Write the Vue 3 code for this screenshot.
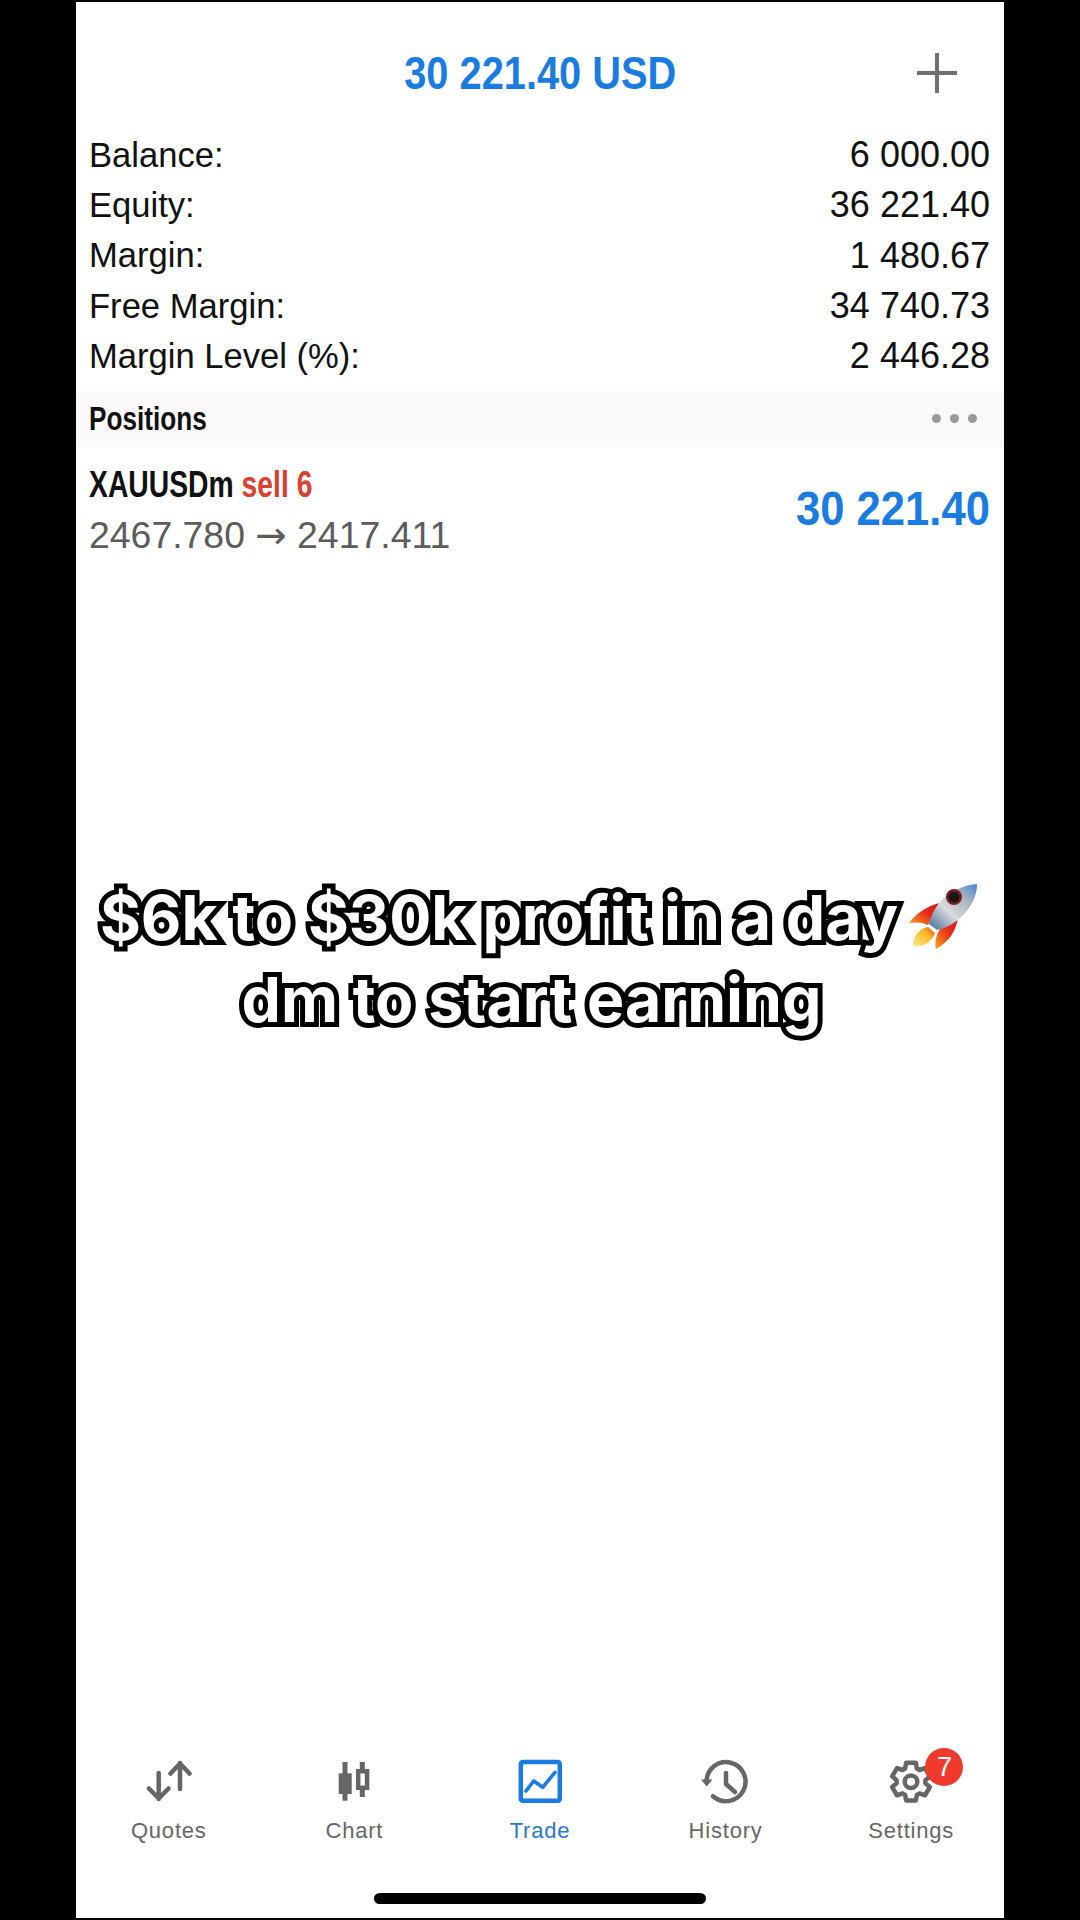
<template>
  <div class="screen">
    <div class="panel">
      <header class="top">
        <span class="top-title">30 221.40 USD</span>
        <svg class="plus" width="40" height="40" viewBox="0 0 40 40">
          <path d="M0 20H40M20 0V40" stroke="#707070" stroke-width="4" />
        </svg>
      </header>

      <div class="summary">
        <div v-for="row in summary" :key="row.label" class="summary-row">
          <span>{{ row.label }}</span>
          <span class="summary-value">{{ row.value }}</span>
        </div>
      </div>

      <div class="section">
        <span class="section-title">Positions</span>
        <span class="dots"><i></i><i></i><i></i></span>
      </div>

      <div class="position">
        <div class="position-left">
          <div class="position-name">XAUUSDm <span class="sell">sell 6</span></div>
          <div class="position-price">2467.780 <span class="arrow">→</span> 2417.411</div>
        </div>
        <div class="position-profit">30 221.40</div>
      </div>

      <nav class="tabs">
        <div v-for="tab in tabs" :key="tab.name" class="tab" :class="{ active: tab.name === 'Trade' }">
          <svg width="60" height="60" viewBox="0 0 60 60" fill="none" stroke="currentColor" stroke-width="4.5">
            <template v-if="tab.name === 'Quotes'">
              <path d="M19.7 21V47M10 36.5L19.7 46.5L29.5 36.5" stroke-linecap="round" stroke-linejoin="round" />
              <path d="M41 37V11M31.5 21.5L41 11.5L50.5 21.5" stroke-linecap="round" stroke-linejoin="round" />
            </template>
            <template v-else-if="tab.name === 'Chart'">
              <path d="M21 10V48.7" stroke-width="5" />
              <rect x="14.7" y="21.3" width="13" height="20.7" fill="currentColor" stroke="none" />
              <path d="M38.3 10V45" stroke-width="5" />
              <rect x="34.2" y="19.2" width="8.9" height="16.6" fill="#fff" />
            </template>
            <template v-else-if="tab.name === 'Trade'">
              <rect x="10.8" y="10" width="39" height="38.7" rx="2" />
              <path d="M16 39L23.7 29L32.7 35.3L45 20.3" stroke-width="3.6" stroke-linecap="round" stroke-linejoin="round" />
            </template>
            <template v-else-if="tab.name === 'History'">
              <path d="M10.5 29.7A19.5 19.5 0 1 1 17 44.2" stroke-linecap="round" />
              <path d="M5 27.5H16.5L10.7 34.5Z" fill="currentColor" stroke="none" />
              <path d="M30 21V32L39 40" stroke-linecap="round" stroke-linejoin="round" />
            </template>
            <template v-else>
              <path :d="gearPath" stroke-linejoin="round" />
              <circle cx="30" cy="29.7" r="6.3" />
            </template>
          </svg>
          <span v-if="tab.badge" class="badge">{{ tab.badge }}</span>
          <span class="tab-label">{{ tab.name }}</span>
        </div>
      </nav>

      <div class="home-bar"></div>

      <div class="caption">
        <div class="caption-line first">
          <span>$6k to $30k profit in a day</span>
          <svg class="rocket" width="72" height="68" viewBox="0 0 72 68">
            <defs>
              <linearGradient id="hull" x1="0" y1="1" x2="1" y2="0">
                <stop offset="0" stop-color="#3f6796" />
                <stop offset="0.4" stop-color="#d9dadd" />
                <stop offset="0.72" stop-color="#a9b3c2" />
                <stop offset="1" stop-color="#3f86d6" />
              </linearGradient>
              <linearGradient id="fin" x1="0" y1="1" x2="1" y2="0">
                <stop offset="0" stop-color="#f8a81c" />
                <stop offset="0.55" stop-color="#ea2c1a" />
                <stop offset="1" stop-color="#c9181a" />
              </linearGradient>
              <linearGradient id="flame" x1="0" y1="1" x2="1" y2="0">
                <stop offset="0" stop-color="#fcec9a" />
                <stop offset="0.65" stop-color="#f9b51f" />
                <stop offset="1" stop-color="#d7431a" />
              </linearGradient>
            </defs>
            <path d="M1 40C8 31 17 24 31 20L20 42C14 39 7 39 1 40Z" fill="url(#fin)" />
            <path d="M28 66C26 58 29 51 32 46L50 33C49 47 41 59 28 66Z" fill="url(#fin)" />
            <path d="M5 63C4 54 12 45 20 44L27 50C25 57 15 66 5 63Z" fill="url(#flame)" />
            <path d="M69 1C58 2 46 6 36 15C28 22 23 32 21 41L29 47C40 45 50 38 57 30C65 21 69 11 69 1Z" fill="url(#hull)" />
            <circle cx="46" cy="14" r="8" fill="#7a1f1f" />
            <circle cx="46" cy="14" r="5.5" fill="#1c1416" />
          </svg>
        </div>
        <div class="caption-line second">
          <span>dm to start earning</span>
        </div>
      </div>
    </div>
  </div>
</template>

<script setup>
const summary = [
  { label: 'Balance:', value: '6 000.00' },
  { label: 'Equity:', value: '36 221.40' },
  { label: 'Margin:', value: '1 480.67' },
  { label: 'Free Margin:', value: '34 740.73' },
  { label: 'Margin Level (%):', value: '2 446.28' },
];

const tabs = [
  { name: 'Quotes' },
  { name: 'Chart' },
  { name: 'Trade' },
  { name: 'History' },
  { name: 'Settings', badge: 7 },
];

// six tooth gear outline
const gearPoints = [];
for (let i = 0; i < 6; i++) {
  const a = (i * Math.PI) / 3 - Math.PI / 2;
  const at = (r, d) => `${(30 + r * Math.cos(a + d)).toFixed(1)} ${(29.7 + r * Math.sin(a + d)).toFixed(1)}`;
  gearPoints.push(at(14.5, -0.42), at(19.5, -0.25), at(19.5, 0.25), at(14.5, 0.42));
}
const gearPath = 'M' + gearPoints.join('L') + 'Z';
</script>

<style scoped>
.screen {
  width: 1080px;
  height: 1920px;
  background: #000;
  display: flex;
  justify-content: center;
  padding: 2px 0;
  box-sizing: border-box;
}
.panel {
  position: relative;
  width: 928px;
  background: #fff;
  display: flex;
  flex-direction: column;
  font-family: "Liberation Sans", Arial, sans-serif;
}
.top {
  height: 128px;
  display: flex;
  align-items: center;
  justify-content: center;
  position: relative;
  padding-top: 13px;
  box-sizing: border-box;
}
.top-title {
  font-weight: 700;
  font-size: 46px;
  color: #1a7be0;
  transform: scaleX(0.865);
}
.plus {
  position: absolute;
  right: 47px;
  top: 51px;
}
.summary {
  padding: 0 14px 0 13px;
}
.summary-row {
  height: 50.3px;
  display: flex;
  justify-content: space-between;
  align-items: center;
  font-size: 34.6px;
  color: #111;
}
.summary-value {
  font-size: 36px;
}
.section {
  margin-top: 10px;
  height: 55px;
  background: #fbf9fb;
  display: flex;
  align-items: center;
  justify-content: space-between;
  padding: 0 27px 0 13px;
}
.section-title {
  font-weight: 700;
  font-size: 34px;
  color: #111;
  transform: scaleX(0.77);
  transform-origin: left center;
}
.dots {
  display: flex;
  gap: 9px;
}
.dots i {
  width: 9px;
  height: 9px;
  border-radius: 50%;
  background: #999;
}
.position {
  display: flex;
  align-items: center;
  justify-content: space-between;
  padding: 14px 14px 0 13px;
}
.position-name {
  font-weight: 700;
  font-size: 37px;
  color: #111;
  line-height: 50px;
  transform: scaleX(0.765);
  transform-origin: left center;
  white-space: nowrap;
}
.sell {
  color: #d9402f;
}
.position-price {
  font-size: 37.4px;
  line-height: 51px;
  color: #5c5c5c;
}
.arrow {
  font-family: "DejaVu Sans", sans-serif;
  font-weight: 400;
}
.position-profit {
  font-weight: 700;
  font-size: 49px;
  color: #1a7be0;
  transform: scaleX(0.89);
  transform-origin: right center;
  margin-bottom: 6px;
}
.tabs {
  margin-top: auto;
  display: grid;
  grid-template-columns: repeat(5, 1fr);
}
.tab {
  position: relative;
  display: flex;
  flex-direction: column;
  align-items: center;
  color: #666;
}
.tab.active {
  color: #1a7be0;
}
.tab-label {
  margin-top: 5px;
  font-size: 22px;
  line-height: 28px;
  letter-spacing: 0.8px;
}
.tab.active .tab-label {
  color: #2d78c4;
}
.badge {
  position: absolute;
  top: -4px;
  left: 107px;
  width: 38px;
  height: 38px;
  border-radius: 50%;
  background: #f03a2e;
  color: #fff;
  font-size: 27px;
  line-height: 38px;
  text-align: center;
}
.home-bar {
  width: 332px;
  height: 11px;
  border-radius: 6px;
  background: #000;
  align-self: center;
  margin: 48px 0 14px;
}
.caption {
  position: absolute;
  left: 0;
  right: 0;
  top: 874px;
  display: flex;
  flex-direction: column;
  align-items: center;
  font-family: Inter, "Liberation Sans", sans-serif;
  font-weight: 700;
  font-size: 62.5px;
  line-height: 82px;
  color: #fff;
}
.caption-line {
  display: flex;
  align-items: center;
  gap: 10px;
  white-space: nowrap;
}
.caption-line.second {
  padding-right: 17px;
}
.caption-line span {
  -webkit-text-stroke: 10px #000;
  paint-order: stroke fill;
}
.rocket {
  flex: none;
}
</style>

<style>
html, body { background: #000; }
</style>
